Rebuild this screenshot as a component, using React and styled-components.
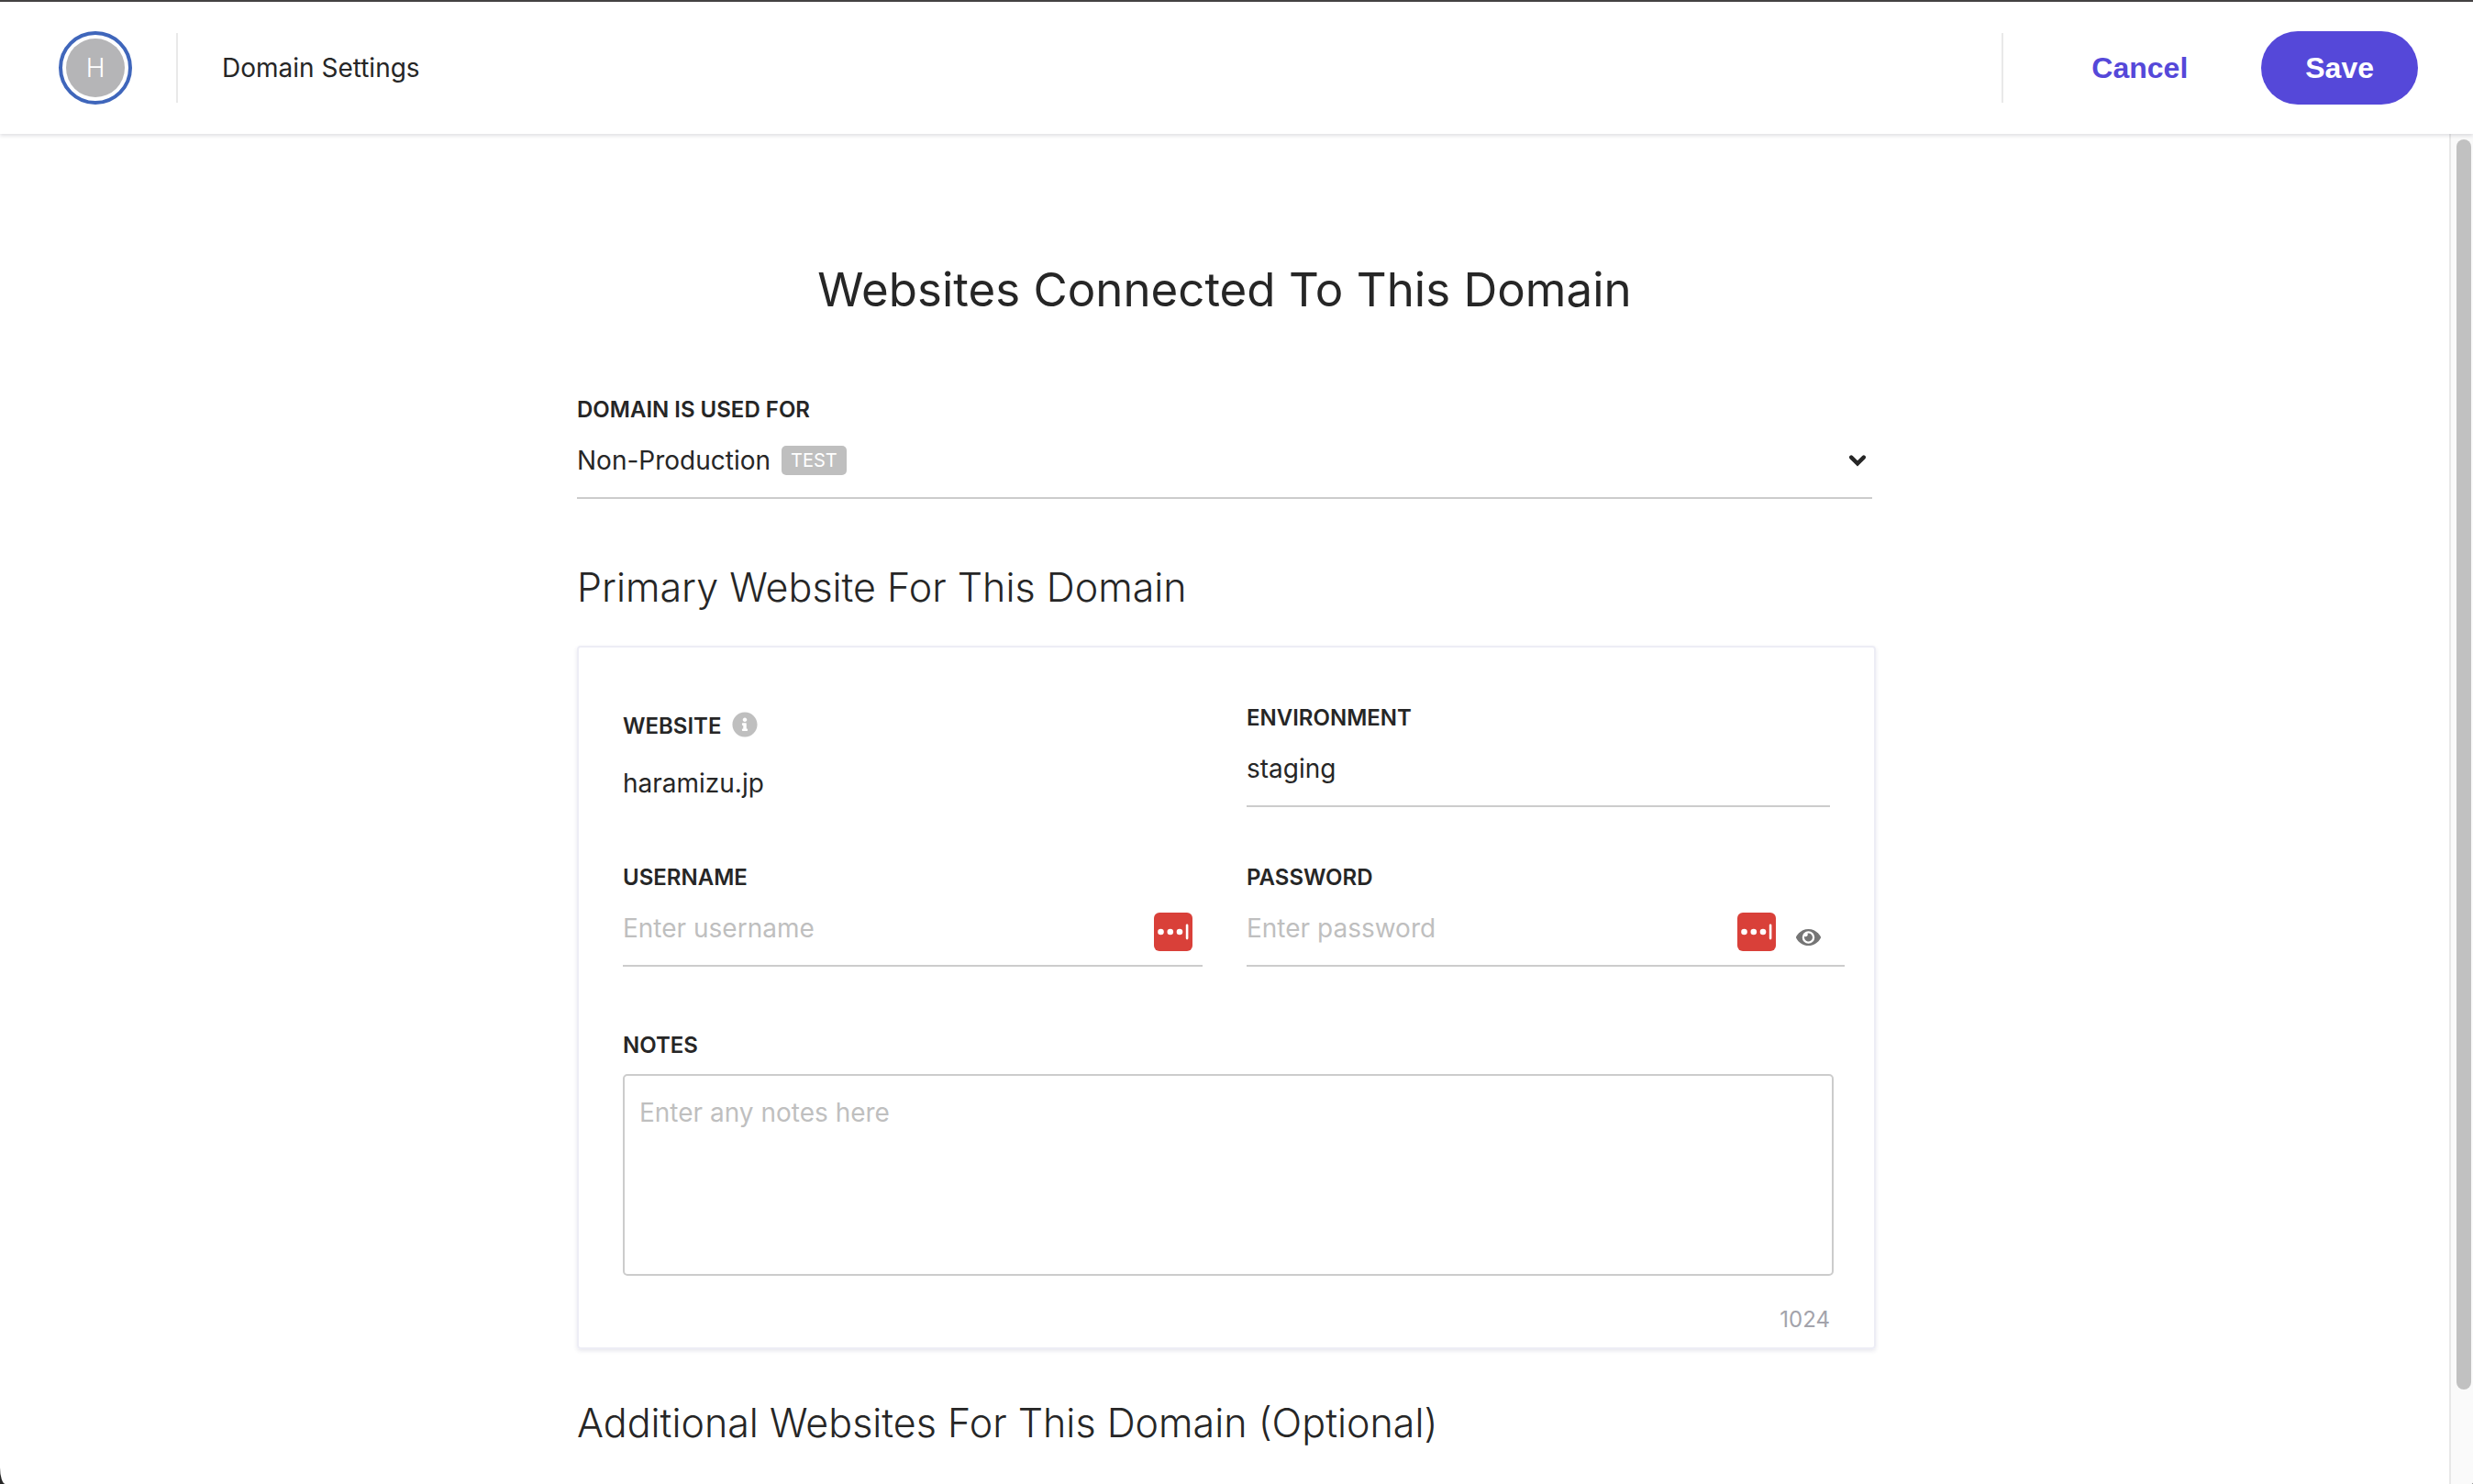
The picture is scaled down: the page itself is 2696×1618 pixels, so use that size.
import React, { useState } from "react";
import styled, { createGlobalStyle, css } from "styled-components";
import { FaEye, FaInfoCircle } from "react-icons/fa";

const ink = "#262626";
const rule = "#cccccc";
const faint = "#bfbfbf";
const accent = "#5548d9";

const GlobalStyle = createGlobalStyle`
  *, *::before, *::after { box-sizing: border-box; }
  body {
    margin: 0;
    background: #262626;
    color: ${ink};
    font-family: Inter, "Liberation Sans", sans-serif;
    font-size: 28px;
  }
  button, input, select, textarea { font: inherit; color: inherit; }
`;

const Shell = styled.div`
  display: flex;
  flex-direction: column;
  height: 100vh;
  overflow: hidden;
  background: #ffffff;
  border-top: 2px solid #444243;
  border-bottom-left-radius: 6px 18px;
  border-bottom-right-radius: 2px;
`;

const Header = styled.header`
  display: flex;
  flex: none;
  align-items: center;
  height: 144px;
  padding: 0 60px 0 64px;
  background: #ffffff;
  box-shadow: 0 2px 4px rgba(30, 30, 50, 0.14);
  z-index: 1;
`;

const Avatar = styled.div`
  display: grid;
  place-items: center;
  width: 80px;
  height: 80px;
  padding: 4px;
  border: 4px solid #3f66bb;
  border-radius: 50%;
  color: #ffffff;
  background: #b5b5b7 content-box;
  font-weight: 300;
  line-height: 64px;
`;

const Divider = styled.span`
  width: 2px;
  height: 76px;
  background: #e9e9e9;
  margin-left: ${(p) => p.$before}px;
  margin-right: ${(p) => p.$after}px;
`;

const PageName = styled.span`
  flex: 1;
`;

const Action = styled.button`
  height: 80px;
  padding: 0 48px;
  border: 0;
  border-radius: 40px;
  background: transparent;
  color: ${accent};
  font-family: "Liberation Sans", Arial, sans-serif;
  font-size: 32px;
  font-weight: 700;
  cursor: pointer;
  ${(p) =>
    p.$primary &&
    css`
      margin-left: 32px;
      background: ${accent};
      color: #ffffff;
    `}
`;

const Body = styled.div`
  display: flex;
  flex: 1;
  min-height: 0;
`;

const Main = styled.main`
  flex: 1;
  overflow: hidden;
  padding: 134px 48px 0;
`;

const Column = styled.form`
  width: 100%;
  max-width: 1412px;
  margin: 0 auto;
`;

const ScrollTrack = styled.div`
  width: 26px;
  padding: 6px 2px 0 8px;
  background: #fafafa;
  box-shadow: inset 2px 0 0 #e8e8e8;
`;

const ScrollThumb = styled.div`
  height: 93%;
  border-radius: 8px;
  background: #c1c1c1;
`;

const Title = styled.h1`
  margin: 0 0 78px;
  font-size: 51px;
  font-weight: 400;
  line-height: 72px;
  text-align: center;
`;

const SectionTitle = styled.h2`
  margin: ${(p) => p.$above}px 0 36px;
  font-size: 43px;
  font-weight: 300;
  line-height: 56px;
`;

const Field = styled.div`
  padding-top: ${(p) => p.$drop || 0}px;
  margin-right: ${(p) => (p.$bleed ? -p.$bleed : 0)}px;
`;

const labelText = css`
  height: 32px;
  font-size: 24px;
  font-weight: 600;
  text-transform: uppercase;
`;

const Label = styled.label`
  ${labelText}
  display: block;
  line-height: 34px;
`;

const Caption = styled.div`
  ${labelText}
  display: flex;
  gap: 12px;
  line-height: 32px;
  svg {
    width: 28px;
    height: 28px;
    color: ${faint};
  }
`;

const Value = styled.div`
  line-height: 92px;
`;

const Underlined = styled.div`
  position: relative;
  display: flex;
  align-items: center;
  height: 82px;
  border-bottom: 2px solid ${rule};
  padding-right: ${(p) => p.$inset || 0}px;
`;

const TextInput = styled.input`
  flex: 1;
  min-width: 0;
  height: 80px;
  padding: 0;
  border: 0;
  outline: 0;
  background: transparent;
  &::placeholder {
    color: ${faint};
    opacity: 1;
  }
`;

const Select = styled.select`
  flex: 1;
  height: 80px;
  padding: 0;
  border: 0;
  outline: 0;
  background: transparent;
  appearance: none;
  cursor: pointer;
`;

const Badge = styled.span`
  position: absolute;
  left: 223px;
  top: 24px;
  padding: 0 10px;
  border-radius: 5px;
  background: ${faint};
  color: #ffffff;
  font-size: 20px;
  line-height: 32px;
  pointer-events: none;
`;

const Chevron = styled.svg`
  position: absolute;
  right: 6px;
  top: 33px;
  width: 20px;
  height: 14px;
  pointer-events: none;
`;

const FillButton = styled.button`
  display: block;
  width: 42px;
  height: 42px;
  padding: 0;
  margin-top: 8px;
  border: 0;
  background: transparent;
  cursor: pointer;
  svg {
    display: block;
  }
`;

const RevealButton = styled.button`
  display: grid;
  place-items: center;
  height: 42px;
  margin: 20px 0 0 22px;
  padding: 0;
  border: 0;
  background: transparent;
  color: #757575;
  cursor: pointer;
  svg {
    width: 27px;
    height: 24px;
  }
`;

const Card = styled.section`
  margin-right: -4px;
  padding: 60px 48px 14px;
  border: 2px solid #ededf5;
  border-radius: 4px;
  box-shadow: 0 2px 4px rgba(60, 60, 110, 0.12);
`;

const Fields = styled.div`
  display: grid;
  grid-template-columns: 632fr 636fr;
  gap: 40px 48px;
  margin-bottom: 69px;
`;

const Notes = styled.textarea`
  display: block;
  width: 100%;
  height: 220px;
  margin-top: 16px;
  padding: 20px 16px;
  border: 2px solid ${rule};
  border-radius: 5px;
  outline: 0;
  resize: none;
  line-height: 40px;
  &::placeholder {
    color: ${faint};
    opacity: 1;
  }
`;

const Counter = styled.div`
  margin-top: 32px;
  color: #a3a3ab;
  font-size: 24px;
  line-height: 32px;
  text-align: right;
`;

function PasswordFill({ label }) {
  return (
    <FillButton type="button" aria-label={label}>
      <svg width="42" height="42" viewBox="0 0 42 42" fill="#ffffff">
        <rect width="42" height="42" rx="6" fill="#d94039" />
        <circle cx="7.5" cy="21" r="3.3" />
        <circle cx="17.8" cy="21" r="3.3" />
        <circle cx="28" cy="21" r="3.3" />
        <rect x="34.8" y="12.4" width="2.6" height="17" rx="1.3" />
      </svg>
    </FillButton>
  );
}

export default function App() {
  const [notes, setNotes] = useState("");
  const [revealed, setRevealed] = useState(false);

  return (
    <>
      <GlobalStyle />
      <Shell>
        <Header>
          <Avatar>H</Avatar>
          <Divider $before={48} $after={48} />
          <PageName>Domain Settings</PageName>
          <Divider $before={0} $after={48} />
          <Action type="button">Cancel</Action>
          <Action type="submit" form="domain-form" $primary>
            Save
          </Action>
        </Header>
        <Body>
          <Main>
            <Column id="domain-form" onSubmit={(e) => e.preventDefault()}>
              <Title>Websites Connected To This Domain</Title>
              <Field>
                <Label htmlFor="usage">Domain is used for</Label>
                <Underlined>
                  <Select id="usage" defaultValue="non-production">
                    <option value="non-production">Non-Production</option>
                  </Select>
                  <Badge>TEST</Badge>
                  <Chevron viewBox="0 0 20 14" fill="none" stroke={ink}>
                    <path d="M3.2 3.6 10 10.4l6.8-6.8" strokeWidth="4.4" strokeLinecap="round" />
                  </Chevron>
                </Underlined>
              </Field>

              <SectionTitle $above={68}>Primary Website For This Domain</SectionTitle>
              <Card>
                <Fields>
                  <Field $drop={10}>
                    <Caption>
                      Website <FaInfoCircle />
                    </Caption>
                    <Value>haramizu.jp</Value>
                  </Field>
                  <Field>
                    <Label htmlFor="environment">Environment</Label>
                    <Underlined>
                      <TextInput id="environment" defaultValue="staging" />
                    </Underlined>
                  </Field>
                  <Field>
                    <Label htmlFor="username">Username</Label>
                    <Underlined $inset={11}>
                      <TextInput id="username" placeholder="Enter username" />
                      <PasswordFill label="Fill username" />
                    </Underlined>
                  </Field>
                  <Field $bleed={16}>
                    <Label htmlFor="password">Password</Label>
                    <Underlined $inset={26}>
                      <TextInput
                        id="password"
                        type={revealed ? "text" : "password"}
                        placeholder="Enter password"
                      />
                      <PasswordFill label="Fill password" />
                      <RevealButton
                        type="button"
                        aria-label="Show password"
                        onClick={() => setRevealed(!revealed)}
                      >
                        <FaEye />
                      </RevealButton>
                    </Underlined>
                  </Field>
                </Fields>
                <Field $bleed={4}>
                  <Label htmlFor="notes">Notes</Label>
                  <Notes
                    id="notes"
                    maxLength={1024}
                    placeholder="Enter any notes here"
                    value={notes}
                    onChange={(e) => setNotes(e.target.value)}
                  />
                </Field>
                <Counter>{1024 - notes.length}</Counter>
              </Card>

              <SectionTitle $above={52}>
                Additional Websites For This Domain (Optional)
              </SectionTitle>
            </Column>
          </Main>
          <ScrollTrack>
            <ScrollThumb />
          </ScrollTrack>
        </Body>
      </Shell>
    </>
  );
}
